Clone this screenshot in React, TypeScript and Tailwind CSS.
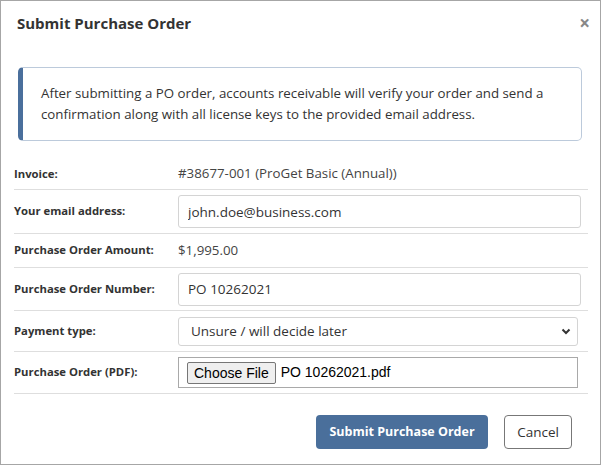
import React from 'react';

const rowCls = 'flex items-center border-b border-[#dedede]';
const labelCls = 'w-[164px] shrink-0 text-[11.3px] font-bold text-[#333]';

export default function App() {
    return (
        <div className="w-[601px] h-[465px] bg-white border border-[#a6a6a6] text-[#333]" style={{ fontFamily: '"Open Sans", "Noto Sans", sans-serif' }}>
            {/* Header */}
            <div className="flex items-center justify-between h-[44px] pl-[16px] pr-[10px]">
                <h2 className="text-[15px] font-bold text-[#333]">Submit Purchase Order</h2>
                <span className="text-[19px] font-bold text-[#888] leading-none">×</span>
            </div>

            {/* Notice */}
            <div className="mt-[22px] ml-[17px] w-[564px] h-[74px] flex items-center rounded-[5px] border border-[#bccadb] border-l-[5px] border-l-[#4a6f9c] pl-[18px] pr-3">
                <p className="text-[13.3px] leading-[21px] text-[#333]">
                    After submitting a PO order, accounts receivable will verify your order and send a confirmation along with all license keys to the provided email address.
                </p>
            </div>

            {/* Form rows */}
            <div className="mt-[18px] ml-[13px] w-[574px]">
                <div className={`${rowCls} h-[31px]`}>
                    <div className={labelCls}>Invoice:</div>
                    <div className="text-[13.3px] text-[#444]">#38677-001 (ProGet Basic (Annual))</div>
                </div>
                <div className={`${rowCls} h-[44px]`}>
                    <div className={labelCls}>Your email address:</div>
                    <input
                        type="text"
                        defaultValue="john.doe@business.com"
                        className="w-[403px] h-[33px] px-[9px] rounded-[3px] border border-[#d4d4d4] text-[13.5px] text-[#333] outline-none"
                    />
                </div>
                <div className={`${rowCls} h-[34px]`}>
                    <div className={labelCls}>Purchase Order Amount:</div>
                    <div className="text-[13.3px] text-[#444]">$1,995.00</div>
                </div>
                <div className={`${rowCls} h-[43px]`}>
                    <div className={labelCls}>Purchase Order Number:</div>
                    <input
                        type="text"
                        defaultValue="PO 10262021"
                        className="w-[403px] h-[33px] px-[9px] rounded-[3px] border border-[#d4d4d4] text-[13.5px] text-[#333] outline-none"
                    />
                </div>
                <div className={`${rowCls} h-[41px]`}>
                    <div className={labelCls}>Payment type:</div>
                    <div className="relative w-[400px] h-[29px] rounded-[3px] border border-[#d4d4d4] flex items-center pl-[12px]">
                        <span className="text-[13.5px] text-[#333]">Unsure / will decide later</span>
                        <svg className="absolute right-[6px] top-[10px]" width="10" height="7" viewBox="0 0 10 7">
                            <path d="M1.5 1.5 L5 5 L8.5 1.5" fill="none" stroke="#333" strokeWidth="2" />
                        </svg>
                    </div>
                </div>
                <div className={`${rowCls} h-[42px]`}>
                    <div className={labelCls}>Purchase Order (PDF):</div>
                    <div className="w-[400px] h-[31px] border border-[#a9a9a9] flex items-center pl-[8px] gap-[5px]" style={{ fontFamily: '"Liberation Sans", Arial, sans-serif' }}>
                        <button className="h-[22px] px-[6px] bg-[#efefef] border border-[#767676] rounded-[2px] text-[14px] text-black leading-none">Choose File</button>
                        <span className="text-[14px] text-black">PO 10262021.pdf</span>
                    </div>
                </div>
            </div>

            {/* Footer */}
            <div className="flex justify-end gap-[16px] mt-[21px] pr-[28px]">
                <button className="h-[34px] w-[172px] rounded-[4px] bg-[#4a6f9b] text-white text-[12.5px] font-bold">Submit Purchase Order</button>
                <button className="h-[34px] w-[68px] rounded-[4px] border border-[#777] bg-white text-[#333] text-[13.5px]">Cancel</button>
            </div>
        </div>
    );
}
